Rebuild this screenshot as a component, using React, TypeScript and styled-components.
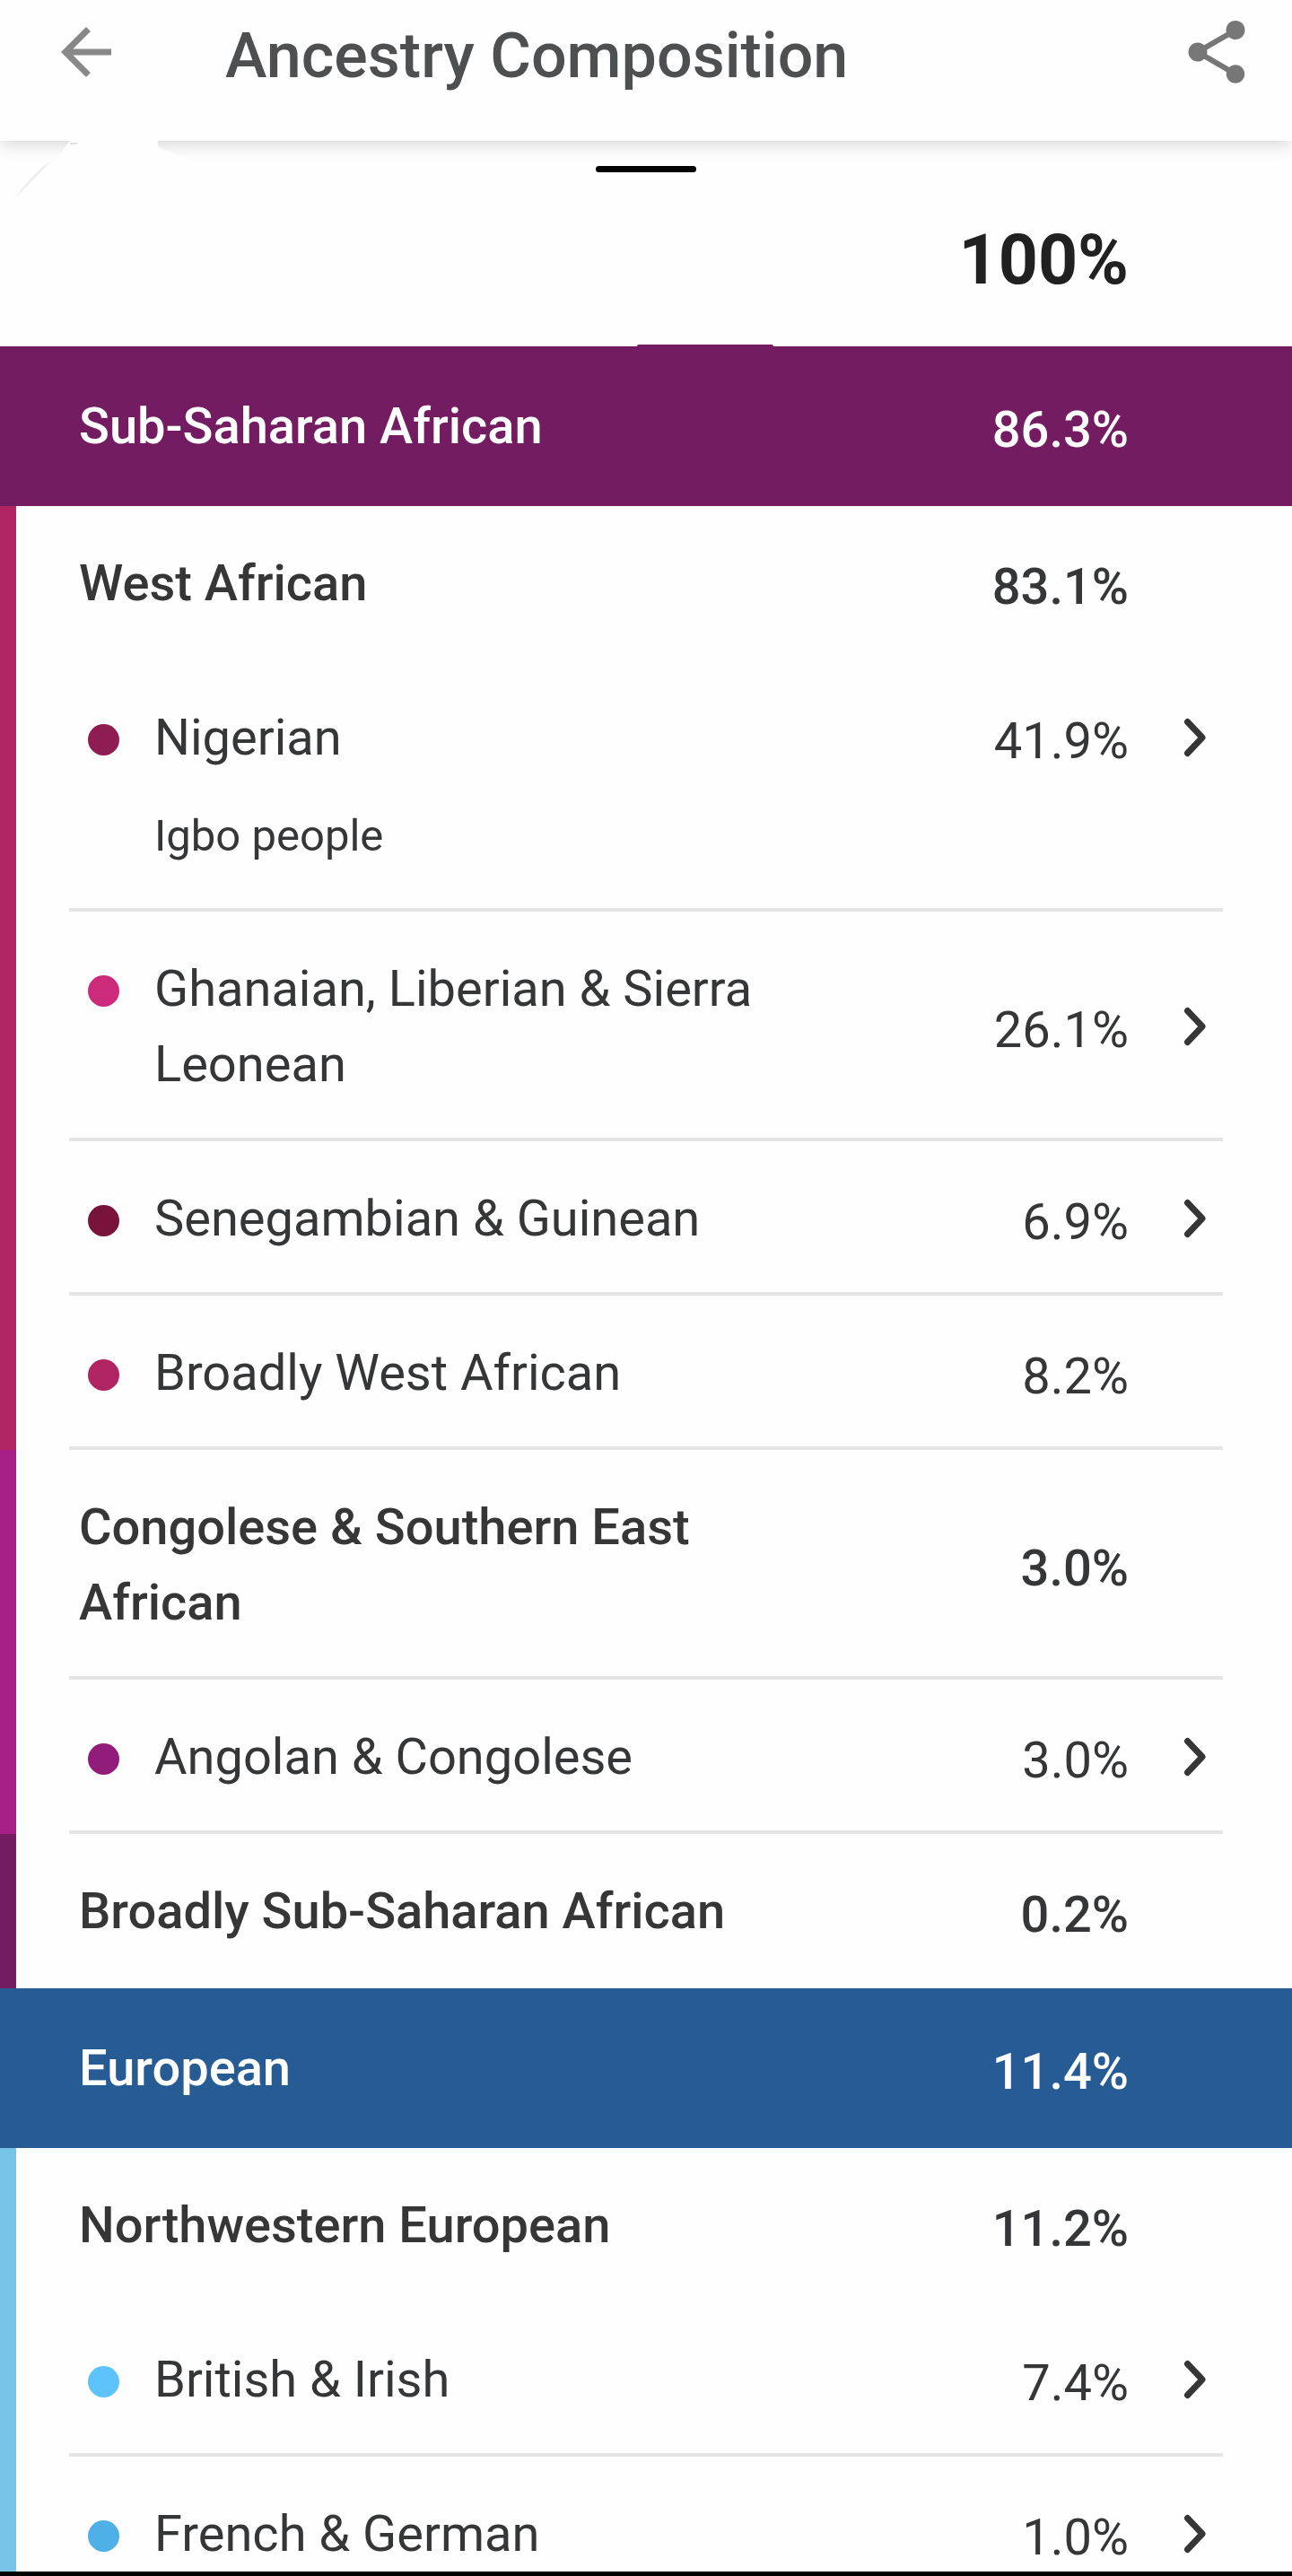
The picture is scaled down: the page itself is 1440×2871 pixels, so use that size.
import React from "react";
import styled, { createGlobalStyle } from "styled-components";

const GlobalStyle = createGlobalStyle`
  *, *::before, *::after { box-sizing: border-box; }
  html, body { margin: 0; padding: 0; background: #fefefe; }
  body { font-family: Roboto, "Noto Sans", "Liberation Sans", sans-serif; color: #343638; }
  h1, h2, h3, p, ul { margin: 0; padding: 0; font: inherit; }
  ul { list-style: none; }
`;

const Screen = styled.div`
  display: flex;
  flex-direction: column;
  height: 100vh;
  overflow: hidden;
`;

const AppBar = styled.header`
  position: relative;
  z-index: 1;
  flex: none;
  display: flex;
  align-items: flex-start;
  padding: 16px 42px 57px 54px;
  background: #fefefe;
  box-shadow: 0 4px 18px rgba(0, 0, 0, 0.16);
`;

const IconButton = styled.button`
  flex: none;
  display: grid;
  place-items: center;
  padding: 0;
  border: 0;
  background: none;
  color: ${(p) => p.color};
  cursor: pointer;

  svg { display: block; fill: currentColor; }
`;

const Title = styled.h1`
  flex: 1;
  margin-left: 113px;
  padding-top: 8px;
  font-size: 70px;
  line-height: 76px;
  font-weight: 500;
  color: #4d4f51;
`;

const Smudge = styled.svg`
  position: absolute;
  top: 100%;
  left: 0;
  pointer-events: none;
`;

const Content = styled.main`
  flex: 1;
  min-height: 0;
  overflow: hidden;
`;

const Total = styled.section`
  display: flex;
  flex-direction: column;
  align-items: center;
  padding: 28px 182px 51px;
`;

const Handle = styled.span`
  width: 112px;
  height: 7px;
  border-radius: 4px;
  background: #000;
`;

const TotalValue = styled.p`
  align-self: flex-end;
  margin-top: 53px;
  font-size: 77px;
  line-height: 90px;
  font-weight: 700;
  color: #212121;
`;

const Band = styled.div<{ $color: string; $tab?: boolean }>`
  position: relative;
  display: grid;
  grid-template-columns: minmax(0, 1fr) auto;
  padding: 47px 182px 47px 88px;
  background: ${(p) => p.$color};
  color: #fff;

  &::before {
    content: ${(p) => (p.$tab ? '""' : "none")};
    position: absolute;
    bottom: 100%;
    left: 710px;
    width: 152px;
    height: 2px;
    border-radius: 2px 2px 0 0;
    background: inherit;
  }
`;

const Group = styled.section<{ $color: string }>`
  padding: 0 77px 0 59px;
  border-left: 18px solid ${(p) => p.$color};
`;

const Row = styled.div<{ $divided: boolean }>`
  display: grid;
  grid-template-columns: minmax(0, 1fr) 389px 26px;
  align-items: center;
  padding: 44px 18px 40px 11px;
  border-bottom: 4px solid ${(p) => (p.$divided ? "#e4e4e4" : "transparent")};
`;

const Heading = styled.h2`
  font-size: 56px;
  line-height: 84px;
  font-weight: 500;
`;

const SubHeading = styled(Heading).attrs({ as: "h3" })`
  color: #363636;
`;

const Region = styled.p`
  display: flex;
  align-items: flex-start;
  gap: 39px;
  padding-left: 10px;
  font-size: 56px;
  line-height: 84px;
`;

const Dot = styled.span<{ $color: string }>`
  flex: none;
  width: 35px;
  height: 35px;
  margin-top: 27px;
  border-radius: 50%;
  background: ${(p) => p.$color};
`;

const Value = styled.span<{ $strong?: boolean }>`
  padding-top: 8px;
  font-size: 56px;
  line-height: 76px;
  font-weight: ${(p) => (p.$strong ? 500 : 400)};
  text-align: right;
`;

const RowValue = styled(Value)`
  padding-right: 61px;
`;

const Note = styled.p`
  grid-column: 1 / -1;
  margin-top: 28px;
  padding-left: 84px;
  font-size: 49px;
  line-height: 80px;
`;

const NavigationBar = styled.div`
  flex: none;
  height: 5px;
  background: #000;
`;

type Entry = {
  name: string;
  value: string;
  color: string;
  note?: string;
  link?: boolean;
};

type Subgroup = { name: string; value: string; color: string; entries: Entry[] };

type Population = { name: string; value: string; color: string; groups: Subgroup[] };

const populations: Population[] = [
  {
    name: "Sub-Saharan African",
    value: "86.3%",
    color: "#741c61",
    groups: [
      {
        name: "West African",
        value: "83.1%",
        color: "#b12462",
        entries: [
          { name: "Nigerian", value: "41.9%", color: "#8e1d52", note: "Igbo people", link: true },
          { name: "Ghanaian, Liberian & Sierra Leonean", value: "26.1%", color: "#cc2a7a", link: true },
          { name: "Senegambian & Guinean", value: "6.9%", color: "#78143a", link: true },
          { name: "Broadly West African", value: "8.2%", color: "#b12462" },
        ],
      },
      {
        name: "Congolese & Southern East African",
        value: "3.0%",
        color: "#a62088",
        entries: [{ name: "Angolan & Congolese", value: "3.0%", color: "#921c79", link: true }],
      },
      { name: "Broadly Sub-Saharan African", value: "0.2%", color: "#741c61", entries: [] },
    ],
  },
  {
    name: "European",
    value: "11.4%",
    color: "#265b93",
    groups: [
      {
        name: "Northwestern European",
        value: "11.2%",
        color: "#78c4e9",
        entries: [
          { name: "British & Irish", value: "7.4%", color: "#5ec3fb", link: true },
          { name: "French & German", value: "1.0%", color: "#4fafe7", link: true },
        ],
      },
    ],
  },
];

function Chevron() {
  return (
    <svg width="26" height="44" viewBox="0 0 26 44" aria-hidden="true">
      <path
        d="M4.5 4.5 21 22 4.5 39.5"
        fill="none"
        stroke="currentColor"
        strokeWidth="7"
        strokeLinecap="round"
        strokeLinejoin="round"
      />
    </svg>
  );
}

function EntryRow({ entry }: { entry: Entry }) {
  return (
    <Row as="li" $divided>
      <Region>
        <Dot $color={entry.color} />
        {entry.name}
      </Region>
      <RowValue>{entry.value}</RowValue>
      {entry.link && (
        <IconButton type="button" color="#343638" aria-label={`Open ${entry.name}`}>
          <Chevron />
        </IconButton>
      )}
      {entry.note && <Note>{entry.note}</Note>}
    </Row>
  );
}

function SubgroupBlock({ group, divided }: { group: Subgroup; divided: boolean }) {
  return (
    <Group $color={group.color}>
      <Row $divided={divided}>
        <SubHeading>{group.name}</SubHeading>
        <RowValue $strong>{group.value}</RowValue>
      </Row>
      {group.entries.length > 0 && (
        <ul>
          {group.entries.map((entry) => (
            <EntryRow key={entry.name} entry={entry} />
          ))}
        </ul>
      )}
    </Group>
  );
}

export default function App() {
  return (
    <>
      <GlobalStyle />
      <Screen>
        <AppBar>
          <IconButton type="button" color="#888888" aria-label="Back">
            <svg width="84" height="84" viewBox="0 0 24 24" aria-hidden="true">
              <path d="M20 11H7.83l5.59-5.59L12 4l-8 8 8 8 1.41-1.41L7.83 13H20v-2z" />
            </svg>
          </IconButton>
          <Title>Ancestry Composition</Title>
          <IconButton type="button" color="#777777" aria-label="Share">
            <svg width="84" height="84" viewBox="0 0 24 24" aria-hidden="true">
              <path d="M18 16.08c-.76 0-1.44.3-1.96.77L8.91 12.7c.05-.23.09-.46.09-.7s-.04-.47-.09-.7l7.05-4.11c.54.5 1.25.81 2.04.81 1.66 0 3-1.34 3-3s-1.34-3-3-3-3 1.34-3 3c0 .24.04.47.09.7L8.04 9.81C7.5 9.31 6.79 9 6 9c-1.66 0-3 1.34-3 3s1.34 3 3 3c.79 0 1.5-.31 2.04-.81l7.12 4.16c-.05.21-.08.43-.08.65 0 1.61 1.31 2.92 2.92 2.92 1.61 0 2.92-1.31 2.92-2.92s-1.31-2.92-2.92-2.92z" />
            </svg>
          </IconButton>
          <Smudge width="230" height="70" viewBox="0 0 230 70" aria-hidden="true">
            <path d="M78 0H176V7L222 26V34H54L66 16Z" fill="#fefefe" />
            <path d="M78 2H88L84 4H78Z" fill="#dedede" />
            <path d="M17 64Q34 38 58 21Q44 36 34 46Z" fill="#ececec" />
          </Smudge>
        </AppBar>
        <Content>
          <Total>
            <Handle />
            <TotalValue>100%</TotalValue>
          </Total>
          {populations.map((population, index) => (
            <section key={population.name}>
              <Band $color={population.color} $tab={index === 0}>
                <Heading>{population.name}</Heading>
                <Value $strong>{population.value}</Value>
              </Band>
              {population.groups.map((group, position) => (
                <SubgroupBlock
                  key={group.name}
                  group={group}
                  divided={position > 0 && group.entries.length > 0}
                />
              ))}
            </section>
          ))}
        </Content>
        <NavigationBar />
      </Screen>
    </>
  );
}
